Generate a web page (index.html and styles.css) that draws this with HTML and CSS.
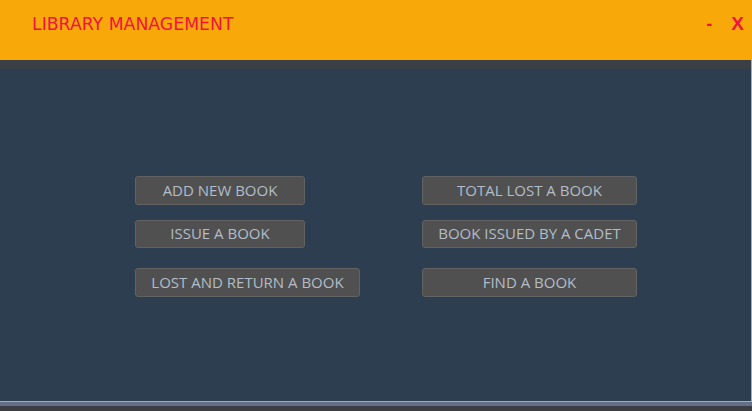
FILE: index.html
```html
<!DOCTYPE html>
<html>
<head>
<meta charset="utf-8">
<link rel="stylesheet" href="styles.css">
</head>
<body>
<div class="window">
  <header class="titlebar">
    <span class="title">LIBRARY MANAGEMENT</span>
    <div class="controls">
      <span class="minimize">-</span>
      <span class="close">X</span>
    </div>
  </header>
  <main class="panel">
    <div class="shade"></div>
    <div class="menu">
      <button class="btn btn-short">ADD NEW BOOK</button>
      <button class="btn btn-wide">TOTAL LOST A BOOK</button>
      <button class="btn btn-short btn-mid">ISSUE A BOOK</button>
      <button class="btn btn-wide btn-mid">BOOK ISSUED BY A CADET</button>
      <button class="btn btn-long btn-last">LOST AND RETURN A BOOK</button>
      <button class="btn btn-wide btn-last">FIND A BOOK</button>
    </div>
  </main>
  <div class="statusbar"></div>
</div>
</body>
</html>
```

FILE: styles.css
```css
html, body {
  margin: 0;
  padding: 0;
}
body {
  width: 752px;
  height: 411px;
  overflow: hidden;
  background: #3c3e41;
}
.window {
  display: flex;
  flex-direction: column;
  width: 752px;
}
.titlebar {
  height: 60px;
  background: #f9a80a;
  display: flex;
  align-items: flex-start;
  justify-content: space-between;
  padding: 13px 8px 0 32px;
  box-sizing: border-box;
}
.title {
  font-family: "DejaVu Sans", Verdana, sans-serif;
  font-size: 17.3px;
  line-height: 22px;
  color: #f2123f;
}
.controls {
  display: flex;
  align-items: center;
  gap: 19px;
  font-family: "Liberation Sans", Arial, sans-serif;
  font-weight: bold;
  color: #f2123f;
  line-height: 22px;
}
.minimize {
  font-size: 18px;
}
.close {
  font-size: 19px;
}
.panel {
  height: 342px;
  box-sizing: border-box;
  background: #2c3e50;
  border-right: 1px solid #f5a313;
  border-bottom: 1px solid #f5a313;
  display: flex;
  flex-direction: column;
}
.shade {
  height: 9px;
  background: #3b4046;
}
.menu {
  display: grid;
  grid-template-columns: 287px 215px;
  grid-template-rows: 29px 28px 29px;
  row-gap: 15px;
  padding: 107px 0 0 135px;
}
.btn {
  box-sizing: border-box;
  height: 29px;
  margin: 0;
  padding: 0 0 2px;
  background: #505050;
  border: 1px solid #626262;
  border-radius: 3px;
  color: #b2bdc9;
  font-family: "Open Sans", "Noto Sans", sans-serif;
  font-size: 15px;
  line-height: 24px;
  text-align: center;
  justify-self: start;
}
.btn-short {
  width: 170px;
}
.btn-long {
  width: 225px;
}
.btn-wide {
  width: 215px;
}
.btn-mid {
  height: 28px;
}
.btn-last {
  margin-top: 5px;
}
.statusbar {
  height: 4px;
  background: #627189;
}
```
